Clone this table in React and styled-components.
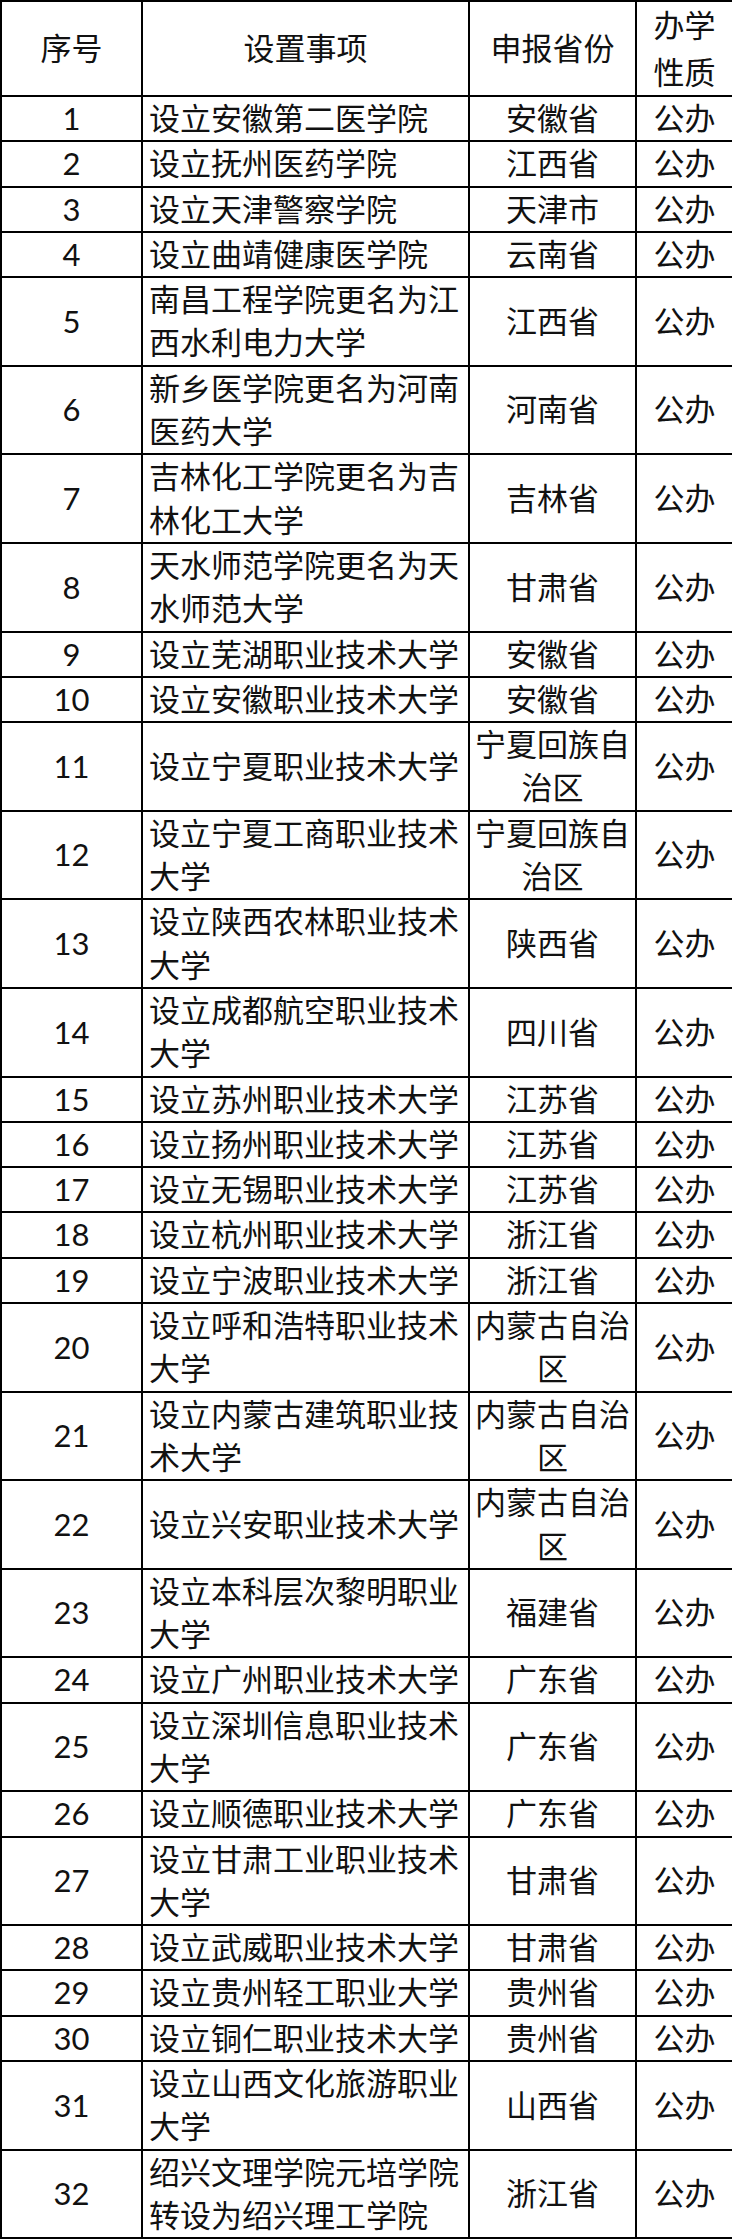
import React from "react";
import styled, { createGlobalStyle } from "styled-components";

const rows = [
  ["1", "设立安徽第二医学院", "安徽省"],
  ["2", "设立抚州医药学院", "江西省"],
  ["3", "设立天津警察学院", "天津市"],
  ["4", "设立曲靖健康医学院", "云南省"],
  ["5", "南昌工程学院更名为江西水利电力大学", "江西省"],
  ["6", "新乡医学院更名为河南医药大学", "河南省"],
  ["7", "吉林化工学院更名为吉林化工大学", "吉林省"],
  ["8", "天水师范学院更名为天水师范大学", "甘肃省"],
  ["9", "设立芜湖职业技术大学", "安徽省"],
  ["10", "设立安徽职业技术大学", "安徽省"],
  ["11", "设立宁夏职业技术大学", "宁夏回族自治区"],
  ["12", "设立宁夏工商职业技术大学", "宁夏回族自治区"],
  ["13", "设立陕西农林职业技术大学", "陕西省"],
  ["14", "设立成都航空职业技术大学", "四川省"],
  ["15", "设立苏州职业技术大学", "江苏省"],
  ["16", "设立扬州职业技术大学", "江苏省"],
  ["17", "设立无锡职业技术大学", "江苏省"],
  ["18", "设立杭州职业技术大学", "浙江省"],
  ["19", "设立宁波职业技术大学", "浙江省"],
  ["20", "设立呼和浩特职业技术大学", "内蒙古自治区"],
  ["21", "设立内蒙古建筑职业技术大学", "内蒙古自治区"],
  ["22", "设立兴安职业技术大学", "内蒙古自治区"],
  ["23", "设立本科层次黎明职业大学", "福建省"],
  ["24", "设立广州职业技术大学", "广东省"],
  ["25", "设立深圳信息职业技术大学", "广东省"],
  ["26", "设立顺德职业技术大学", "广东省"],
  ["27", "设立甘肃工业职业技术大学", "甘肃省"],
  ["28", "设立武威职业技术大学", "甘肃省"],
  ["29", "设立贵州轻工职业大学", "贵州省"],
  ["30", "设立铜仁职业技术大学", "贵州省"],
  ["31", "设立山西文化旅游职业大学", "山西省"],
  ["32", "绍兴文理学院元培学院转设为绍兴理工学院", "浙江省"],
];

const GlobalStyle = createGlobalStyle`
  body {
    margin: 0;
    background: #fff;
  }
`;

const Table = styled.table`
  width: 732px;
  table-layout: fixed;
  border-collapse: collapse;
  font-family: Lato, "Noto Sans CJK SC", sans-serif;
  font-size: 31px;
  color: #111;
`;

const HeadCell = styled.th`
  border: 2px solid #000;
  padding: 0 4px;
  font-weight: 400;
  line-height: 46.5px;
  text-align: center;
  vertical-align: middle;
`;

const Cell = styled.td`
  border: 2px solid #000;
  padding: ${(p) => (p.$align === "left" ? "0 2px 0 6px" : "0 4px")};
  line-height: 43.3px;
  text-align: ${(p) => p.$align || "center"};
  vertical-align: middle;
  word-break: break-all;
`;

const App = () => {
  return (
    <>
      <GlobalStyle />
      <Table>
        <colgroup>
          <col style={{ width: 141 }} />
          <col style={{ width: 327 }} />
          <col style={{ width: 167 }} />
          <col style={{ width: 97 }} />
        </colgroup>
        <thead>
          <tr>
            <HeadCell>序号</HeadCell>
            <HeadCell>设置事项</HeadCell>
            <HeadCell>申报省份</HeadCell>
            <HeadCell>办学性质</HeadCell>
          </tr>
        </thead>
        <tbody>
          {rows.map(([no, item, province]) => (
            <tr key={no}>
              <Cell>{no}</Cell>
              <Cell $align="left">{item}</Cell>
              <Cell>{province}</Cell>
              <Cell>公办</Cell>
            </tr>
          ))}
        </tbody>
      </Table>
    </>
  );
};

export default App;
